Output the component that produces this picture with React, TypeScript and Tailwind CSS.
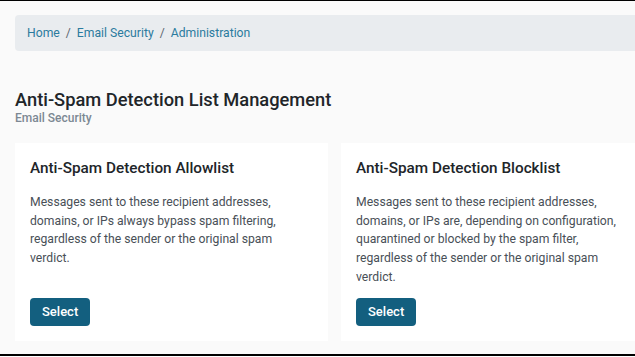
const cards = [
  {
    title: 'Anti-Spam Detection Allowlist',
    text: 'Messages sent to these recipient addresses, domains, or IPs always bypass spam filtering, regardless of the sender or the original spam verdict.',
  },
  {
    title: 'Anti-Spam Detection Blocklist',
    text: 'Messages sent to these recipient addresses, domains, or IPs are, depending on configuration, quarantined or blocked by the spam filter, regardless of the sender or the original spam verdict.',
  },
];

export default function App() {
  return (
    <div
      className="w-[635px] h-[357px] overflow-hidden bg-[#fafafa] border-t border-black flex flex-col"
      style={{ fontFamily: 'Roboto, "Liberation Sans", sans-serif' }}
    >
      <div className="flex-1 pl-[15px] pt-[14px]">
        <nav className="h-[36px] bg-[#e9ecef] rounded-l-[4px] flex items-center pl-[12px] text-[12.2px] text-[#2b7b9e]">
          <span>Home</span>
          <span className="mx-[6px] text-[#5c6670]">/</span>
          <span>Email Security</span>
          <span className="mx-[6px] text-[#5c6670]">/</span>
          <span>Administration</span>
        </nav>

        <div className="mt-[38px]">
          <h1 className="text-[18.3px] leading-[22px] font-medium text-[#212529]">
            Anti-Spam Detection List Management
          </h1>
          <p className="text-[12px] leading-[14px] font-medium text-[#7c8893]">Email Security</p>
        </div>

        <div className="mt-[18px] flex gap-[13px]">
          {cards.map((card) => (
            <div
              key={card.title}
              className="w-[313px] shrink-0 bg-white p-[15px] flex flex-col"
            >
              <h2 className="text-[15.3px] leading-[20px] font-medium text-[#212529]">{card.title}</h2>
              <p className="mt-[15px] max-w-[270px] text-[12.2px] leading-[18.7px] text-[#495057]">{card.text}</p>
              <div className="mt-auto pt-[11px]">
                <button className="h-[28px] px-[12px] rounded-[4px] bg-[#135f7f] text-white text-[13px] font-medium">
                  Select
                </button>
              </div>
            </div>
          ))}
        </div>
      </div>
      <div className="h-[2px] bg-black" />
      <div className="h-[1px] bg-white" />
    </div>
  );
}
